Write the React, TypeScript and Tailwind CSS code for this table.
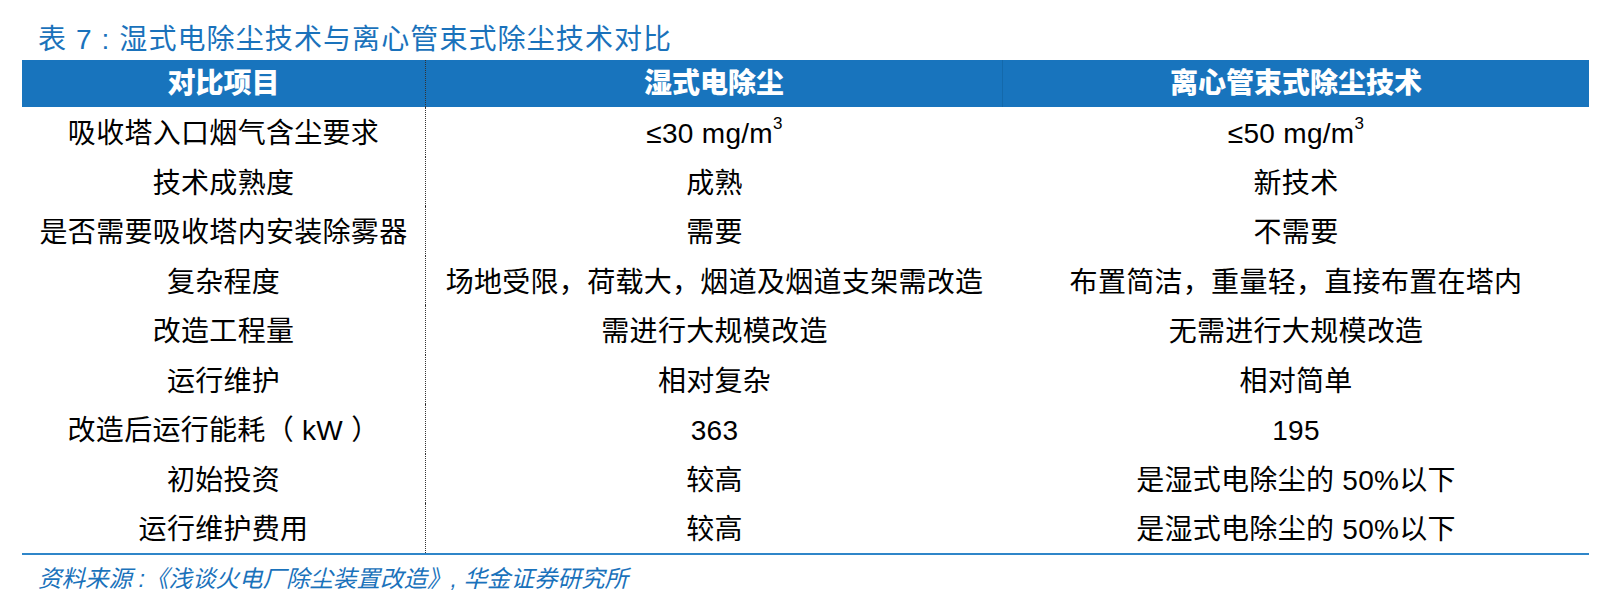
const sup = <sup className="text-[17px] leading-none relative -top-[11px] align-baseline">3</sup>;

const rows: [string, React.ReactNode, React.ReactNode][] = [
  ["吸收塔入口烟气含尘要求", <>≤30 mg/m{sup}</>, <>≤50 mg/m{sup}</>],
  ["技术成熟度", "成熟", "新技术"],
  ["是否需要吸收塔内安装除雾器", "需要", "不需要"],
  ["复杂程度", "场地受限，荷载大，烟道及烟道支架需改造", "布置简洁，重量轻，直接布置在塔内"],
  ["改造工程量", "需进行大规模改造", "无需进行大规模改造"],
  ["运行维护", "相对复杂", "相对简单"],
  ["改造后运行能耗（ kW ）", "363", "195"],
  ["初始投资", "较高", "是湿式电除尘的 50%以下"],
  ["运行维护费用", "较高", "是湿式电除尘的 50%以下"],
];

const font = "font-['Liberation_Sans','Noto_Sans_CJK_SC',sans-serif]";

export default function App() {
  return (
    <div className={`w-[1602px] h-[602px] bg-white ${font} text-black`}>
      <div className="pl-[38px] pt-[24px] h-[60px] text-[28px] leading-[32px] text-[#1a72bb] tracking-[1.1px]">
        表 7 : 湿式电除尘技术与离心管束式除尘技术对比
      </div>
      <div className="ml-[22px] w-[1567px]">
        <div className="grid grid-cols-[404px_577px_586px] h-[47px] bg-[#1874bd] text-white text-[28px] font-black">
          <div className="flex items-center justify-center border-r border-dotted border-[#333]">对比项目</div>
          <div className="flex items-center justify-center border-r border-[#1469ab]">湿式电除尘</div>
          <div className="flex items-center justify-center">离心管束式除尘技术</div>
        </div>
        <div className="border-b-2 border-[#2f86c9]">
          {rows.map((r, i) => (
            <div key={i} className="grid grid-cols-[404px_577px_586px] h-[49.5px] text-[28px] tracking-[0.3px]">
              <div className="flex items-center justify-center pt-[5px] border-r border-dotted border-[#333]">{r[0]}</div>
              <div className="flex items-center justify-center pt-[5px]">{r[1]}</div>
              <div className="flex items-center justify-center pt-[5px]">{r[2]}</div>
            </div>
          ))}
        </div>
      </div>
      <div className="pl-[38px] pt-[10px] text-[23.5px] leading-[28px] italic text-[#1a72bb]">
        资料来源 :《浅谈火电厂除尘装置改造》, 华金证券研究所
      </div>
    </div>
  );
}
